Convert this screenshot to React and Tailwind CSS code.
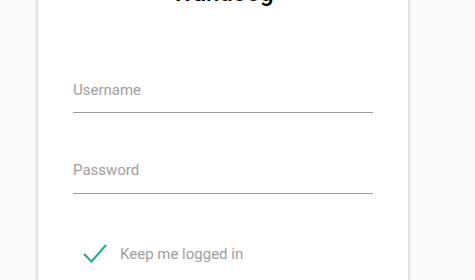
export default function App() {
  return (
    <div className="min-h-screen bg-[#fafafa] font-['Roboto',sans-serif] overflow-hidden">
      <div className="ml-[38px] w-[370px] bg-white shadow-[0_2px_2px_0_rgba(0,0,0,0.14),0_3px_1px_-2px_rgba(0,0,0,0.12),0_1px_5px_0_rgba(0,0,0,0.2)] px-[35px] pb-10">
        <h5 className="mt-[-21px] h-[28px] text-center text-[24px] leading-[28px] font-medium text-black">
          Wandoog
        </h5>

        <div className="mt-[73px]">
          <div className="h-[20px] text-[15px] leading-[20px] text-[#9e9e9e]">Username</div>
          <div className="mt-[12px] h-px bg-[#9e9e9e]" />
        </div>

        <div className="mt-[47px]">
          <div className="h-[20px] text-[15px] leading-[20px] text-[#9e9e9e]">Password</div>
          <div className="mt-[13px] h-px bg-[#9e9e9e]" />
        </div>

        <label className="mt-[49px] flex items-center">
          <svg width="47" height="22" viewBox="0 0 47 22" className="shrink-0">
            <polyline
              points="11,11 18.5,18.5 33,2"
              fill="none"
              stroke="#26a69a"
              strokeWidth="2"
            />
          </svg>
          <span className="text-[15px] leading-[20px] text-[#9e9e9e]">Keep me logged in</span>
        </label>
      </div>
    </div>
  );
}
